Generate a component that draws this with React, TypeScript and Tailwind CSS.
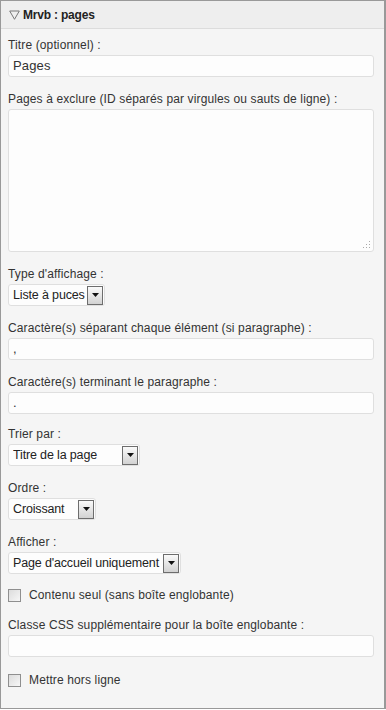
import React from "react"

type FieldProps = {
    label: string
    children: React.ReactNode
    mb?: string
}

const Field = ({ label, children, mb = "mb-[14px]" }: FieldProps) => (
    <div className={mb}>
        <div className="h-[16px] leading-[16px] mb-[2px] whitespace-nowrap">{label}</div>
        {children}
    </div>
)

const TextInput = ({ value = "" }: { value?: string }) => (
    <div className="h-[22px] w-full bg-[#fdfdfd] border border-[#dfdfdf] rounded-[3px] px-[4px] text-[13px] leading-[20px] text-[#333]">
        {value}
    </div>
)

const Select = ({ value, width }: { value: string; width: string }) => (
    <div
        className={`${width} h-[22px] flex items-center bg-[#fdfdfd] border border-[#dfdfdf] rounded-[3px] pl-[4px] pr-[1px] text-[12.5px] tracking-[-0.15px] text-[#222]`}
    >
        <span className="flex-1 whitespace-nowrap overflow-hidden">{value}</span>
        <span className="w-[16px] h-[19px] shrink-0 flex items-center justify-center border border-[#6d6d6d] bg-gradient-to-b from-[#fafafa] to-[#d2d2d2]">
            <svg width="7" height="4" viewBox="0 0 7 4">
                <path d="M0 0h7L3.5 4z" fill="#111" />
            </svg>
        </span>
    </div>
)

const Checkbox = ({ label }: { label: string }) => (
    <div className="flex items-center gap-[8px] h-[14px] mb-[15px]">
        <span className="w-[13px] h-[13px] border border-[#8f8f8f] bg-gradient-to-br from-[#dcdcdc] to-[#f7f7f7]" />
        <span>{label}</span>
    </div>
)

export default function App() {
    return (
        <div className="w-[386px] h-[709px] bg-white">
            <div className="h-full border border-r-2 border-[#999999] bg-[#f5f5f5] font-['Liberation_Sans',Arial,sans-serif] text-[12px] tracking-[0.13px] text-[#333]">
                <div className="h-[28px] bg-[#eeeeee] border-b border-[#dcdcdc] flex items-center pl-[8px] pr-[7px] gap-[3px]">
                    <svg width="11" height="10" viewBox="0 0 11 10">
                        <path d="M0.7 1h9.6L5.5 9.3z" fill="none" stroke="#777" strokeWidth="1" />
                    </svg>
                    <span className="font-bold text-[12px] text-[#222] tracking-[-0.2px]">Mrvb : pages</span>
                </div>
                <div className="pl-[7px] pr-[10px] pt-[8px]">
                    <Field label="Titre (optionnel) :">
                        <TextInput value="Pages" />
                    </Field>
                    <Field label="Pages à exclure (ID séparés par virgules ou sauts de ligne) :">
                        <div className="relative h-[143px] w-full bg-[#fdfdfd] border border-[#dfdfdf] rounded-[3px]">
                            <svg className="absolute right-[3px] bottom-[3px]" width="7" height="7" viewBox="0 0 7 7">
                                <rect x="6" y="0" width="1" height="1" fill="#aaa" />
                                <rect x="3" y="3" width="1" height="1" fill="#aaa" />
                                <rect x="6" y="3" width="1" height="1" fill="#aaa" />
                                <rect x="0" y="6" width="1" height="1" fill="#aaa" />
                                <rect x="3" y="6" width="1" height="1" fill="#aaa" />
                                <rect x="6" y="6" width="1" height="1" fill="#aaa" />
                            </svg>
                        </div>
                    </Field>
                    <Field label="Type d'affichage :">
                        <Select value="Liste à puces" width="w-[97px]" />
                    </Field>
                    <Field label="Caractère(s) séparant chaque élément (si paragraphe) :">
                        <TextInput value="," />
                    </Field>
                    <Field label="Caractère(s) terminant le paragraphe :" mb="mb-[12px]">
                        <TextInput value="." />
                    </Field>
                    <Field label="Trier par :">
                        <Select value="Titre de la page" width="w-[132px]" />
                    </Field>
                    <Field label="Ordre :">
                        <Select value="Croissant" width="w-[88px]" />
                    </Field>
                    <Field label="Afficher :">
                        <Select value="Page d'accueil uniquement" width="w-[173px]" />
                    </Field>
                    <Checkbox label="Contenu seul (sans boîte englobante)" />
                    <Field label="Classe CSS supplémentaire pour la boîte englobante :" mb="mb-[16px]">
                        <TextInput />
                    </Field>
                    <Checkbox label="Mettre hors ligne" />
                </div>
            </div>
        </div>
    )
}
